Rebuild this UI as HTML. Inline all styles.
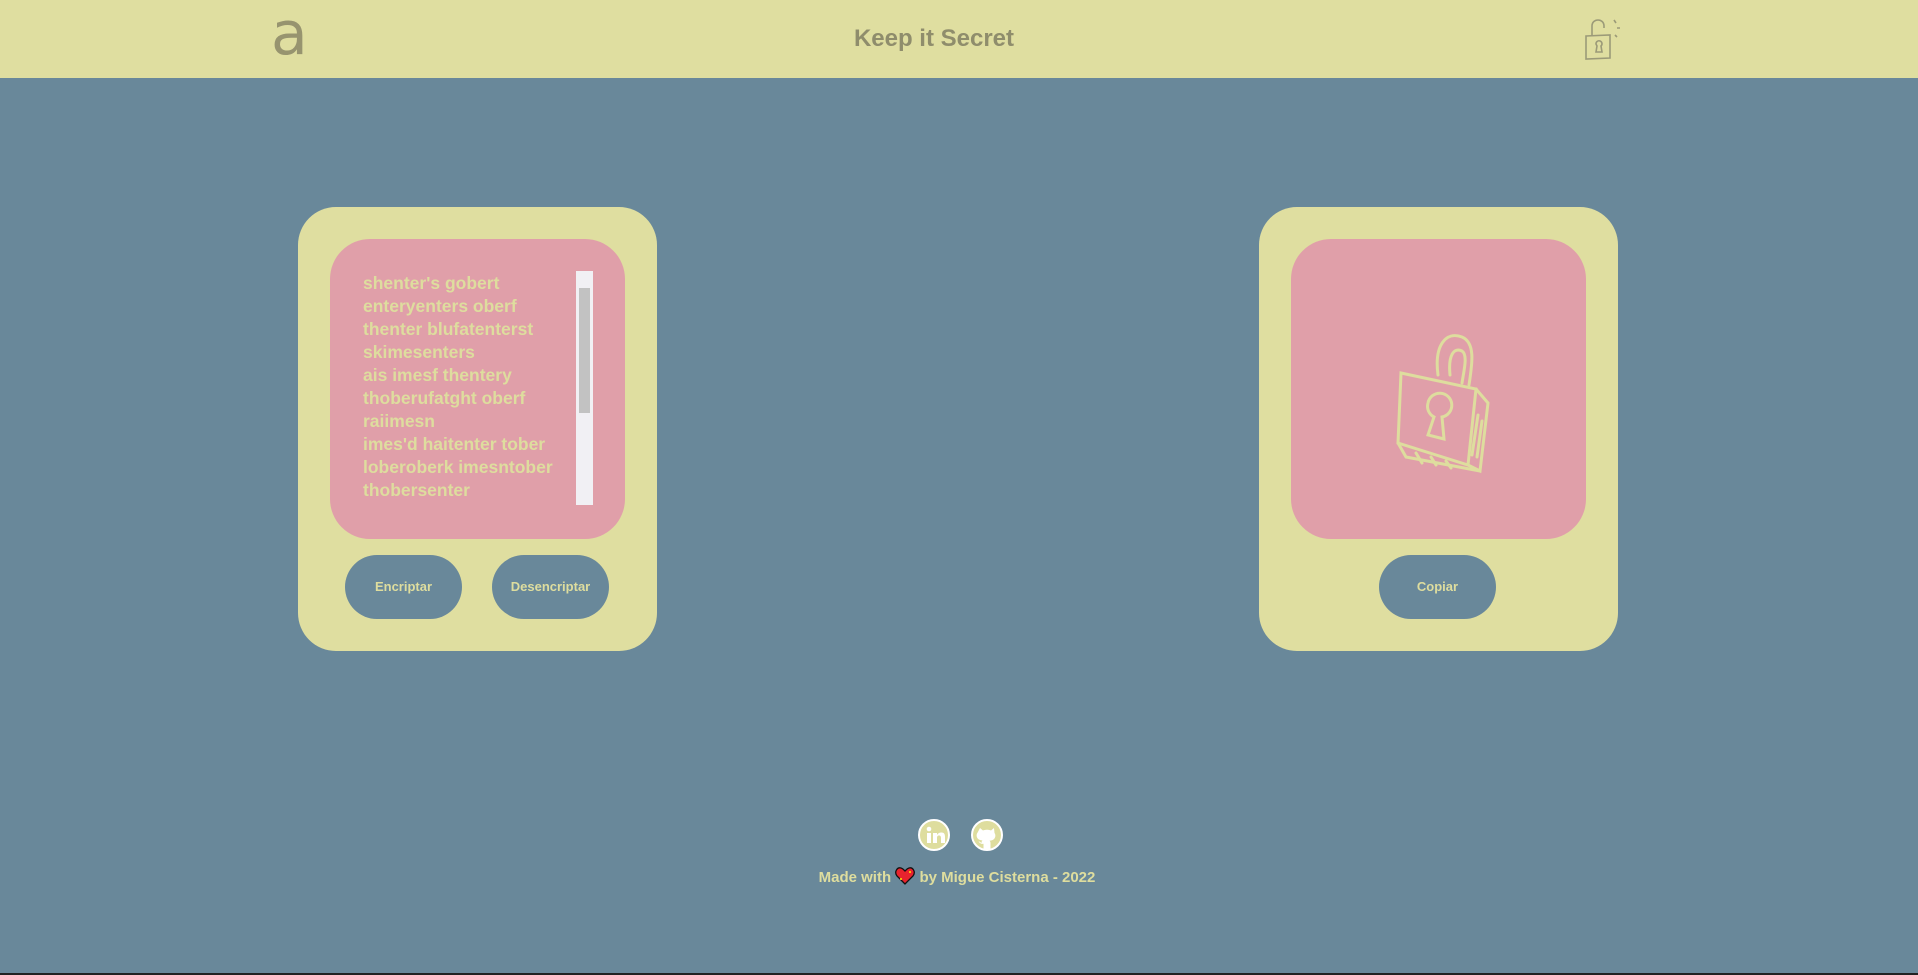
<!DOCTYPE html>
<html><head><meta charset="utf-8">
<style>
*{margin:0;padding:0;box-sizing:border-box}
html,body{width:1918px;height:975px;overflow:hidden}
body{background:#69889a;font-family:"Liberation Sans",sans-serif;position:relative}
header{position:absolute;left:0;top:0;width:1918px;height:78px;background:#dfdea0}
.logo{position:absolute;left:271px;top:4px;font-size:60px;color:#97946f;font-family:"DejaVu Sans",sans-serif;line-height:1}
.title{position:absolute;left:0;width:1868px;text-align:center;top:25px;font-size:24px;font-weight:bold;color:#8f8d6c}
.card{position:absolute;top:207px;width:359px;height:444px;background:#dfdea0;border-radius:38px}
.pink{position:absolute;left:32px;top:32px;width:295px;height:300px;background:#e09fa9;border-radius:40px}
.btn{position:absolute;top:348px;width:117px;height:64px;background:#69889a;border-radius:32px;color:#dedd9e;font-weight:bold;font-size:13px;text-align:center;line-height:64px}
.txt{position:absolute;left:33px;top:33px;color:#dedd9e;font-weight:bold;font-size:17.5px;line-height:23px}
.sb{position:absolute;left:246px;top:32px;width:17px;height:234px;background:#f1f0f4}
.thumb{position:absolute;left:3px;top:17px;width:11px;height:125px;background:#c2c2c2}
.foot{position:absolute;top:867px;left:0;width:1914px;text-align:center;color:#dedd9e;font-weight:bold;font-size:15px}
.ic{position:absolute;top:819px;width:32px;height:32px;border-radius:50%;background:#dedd9e;border:2px solid #fff}
.line{position:absolute;left:0;bottom:0;width:1918px;height:2px;background:#222}
</style></head><body>
<header>
<div class="logo">a</div>
<div class="title">Keep it Secret</div>
<svg style="position:absolute;left:1582px;top:14px" width="48" height="48" viewBox="0 0 48 48" fill="none" stroke="#9b9a78" stroke-width="1.6">
<path d="M10 22 V12 C10 4 22 4 22 12 V14"/>
<path d="M4 22 L28 21 L28 44 L4 45 Z"/>
<path d="M14 30 a3 3 0 1 1 5 2 l1 6 h-6 l1 -6 z"/>
<path d="M32 6 l2 3 M35 14 l3 0 M33 21 l2 2"/>
</svg>
</header>

<div class="card" style="left:298px">
<div class="pink">
<div class="txt">shenter's gobert<br>enteryenters oberf<br>thenter blufatenterst<br>skimesenters<br>ais imesf thentery<br>thoberufatght oberf<br>raiimesn<br>imes'd haitenter tober<br>loberoberk imesntober<br>thobersenter</div>
<div class="sb"><div class="thumb"></div></div>
</div>
<div class="btn" style="left:47px">Encriptar</div>
<div class="btn" style="left:194px">Desencriptar</div>
</div>

<div class="card" style="left:1259px">
<div class="pink">
<svg style="position:absolute;left:85px;top:86px" width="130" height="150" viewBox="0 0 130 150" fill="none" stroke="#dedd9e" stroke-width="3" stroke-linecap="round">
<path d="M62 50 C58 20 70 6 86 12 C100 18 96 40 93 60"/>
<path d="M74 50 C72 30 78 22 86 26 C92 30 88 45 86 58"/>
<path d="M25 48 L100 64 L92 140 L22 118 Z"/>
<path d="M100 64 L112 78 L104 146 L92 140"/>
<path d="M22 118 L30 132 L104 146"/>
<path d="M52 78 a12 12 0 1 1 14 14 l2 22 l-16 -4 l6 -18 a12 12 0 0 1 -6 -14z"/>
<path d="M102 90 l-6 40 M106 96 l-5 36 M40 128 l6 10 M55 132 l5 8 M70 136 l5 7"/>
</svg>
</div>
<div class="btn" style="left:120px">Copiar</div>
</div>

<div class="ic" style="left:918px"><svg width="28" height="28" viewBox="0 0 28 28"><circle cx="9" cy="8" r="2.3" fill="#fff"/><rect x="7" y="12" width="4" height="10" fill="#fff"/><path d="M13 12h4v2c1-2 3-2.5 4.5-2.5 3 0 3.5 2 3.5 5V22h-4v-5c0-1.5-.5-2.5-2-2.5s-2 1-2 2.5v5h-4z" fill="#fff"/></svg></div>
<div class="ic" style="left:971px"><svg width="28" height="28" viewBox="0 0 28 28"><path d="M7 7l3 2.5c2.5-1 5.5-1 8 0L21 7l.5 5c1.5 2 1 5-1 6.5-1 .8-3 1.2-4 1.2 1 .8 1 2 1 3V28h-7v-5.3c-2 .5-4-.5-5-2.5 1 .2 2 1 3 1.8 0-1 .3-2 1-2.6-1 0-3-.4-4-1.2-2-1.5-2.5-4.5-1-6.5z" fill="#fff"/></svg></div>
<div class="foot">Made with <svg width="20" height="18" viewBox="0 0 20 18" style="vertical-align:-3px"><path d="M10 17 L2 9 C-1 5 2 0 6 1 C8 1.5 9 3 10 4 C11 3 12 1.5 14 1 C18 0 21 5 18 9 Z" fill="#e8232d" stroke="#111" stroke-width="1.3"/><path d="M14 5h2M15 4v2M5 12h2M6 11v2" stroke="#ffd800" stroke-width="1.2"/></svg> by Migue Cisterna - 2022</div>
<div class="line"></div>
</body></html>
